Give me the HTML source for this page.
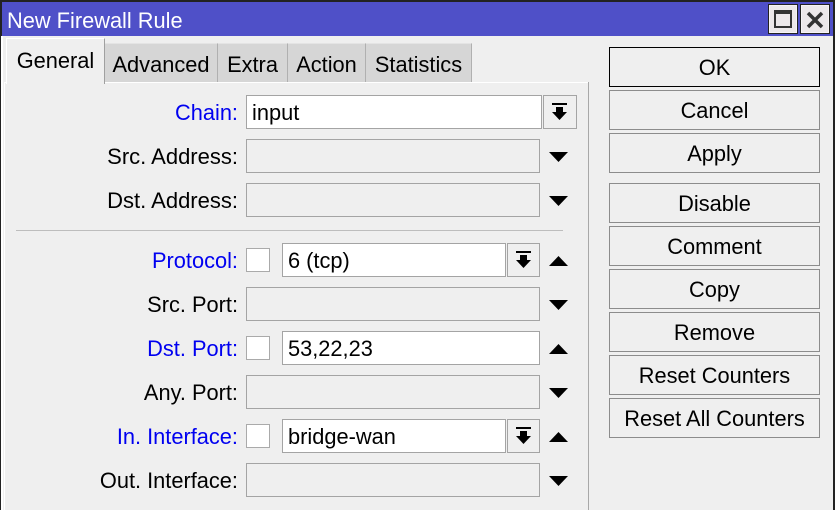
<!DOCTYPE html>
<html><head><meta charset="utf-8"><style>
html,body{margin:0;padding:0;width:835px;height:510px;overflow:hidden;background:#efefef}
*{box-sizing:border-box}
body{font-family:"Liberation Sans",sans-serif;font-size:21.8px;color:#000;position:relative}
div,svg{position:absolute}
.l{right:597px;width:220px;text-align:right;height:34px;line-height:36px;white-space:nowrap}
.blue{color:#0000f0}
.f{height:34px;border:1px solid #a4a4a4;background:#efefef;line-height:34px;padding-left:5px;white-space:nowrap}
.w{background:#fff}
.cb{width:24px;height:24px;background:#fff;border:1px solid #aaa}
.b{left:609px;width:211px;height:40px;border:1px solid #8c8c8c;text-align:center;line-height:40px;background:#efefef}
.t{background:#d6d6d6;top:43px;height:39px;line-height:41px;text-align:center;border-right:1px solid #b0b0b0;border-top:1px solid #e4e4e4}
</style></head><body>
<div style="left:0;top:0;width:835px;height:510px;border-left:2px solid #222;border-top:2px solid #222;border-right:2px solid #222"></div>
<div style="left:1px;top:36px;width:2px;height:474px;background:#fff"></div>
<div style="left:2px;top:2px;width:831px;height:34px;background:#4f50c8"></div>
<div style="left:7px;top:6px;height:30px;line-height:30px;color:#fff">New Firewall Rule</div>

<div style="left:768px;top:4px;width:30px;height:30px;background:#ece8ea;border:1px solid #222;box-shadow:inset 0 0 0 1px #f6f4f5"></div>
<div style="left:774px;top:10px;width:18px;height:18px;border:2px solid #333;border-top-width:4px"></div>
<div style="left:800px;top:4px;width:30px;height:30px;background:#ece8ea;border:1px solid #222;box-shadow:inset 0 0 0 1px #f6f4f5"></div>
<svg style="left:800px;top:4px" width="30" height="30"><path d="M8 9 L22 23 M22 9 L8 23" stroke="#333" stroke-width="3.5" fill="none"/></svg>

<div style="left:4px;top:82px;width:585px;height:428px;border-left:1px solid #fff;border-top:1px solid #fff;background:#efefef"></div>
<div style="left:588px;top:82px;width:1px;height:428px;background:#a8a8a8"></div>

<div style="left:6px;top:38px;width:99px;height:46px;background:#efefef;border-top:1px solid #fff;border-left:1px solid #fff;border-right:1px solid #a0a0a0;text-align:center;line-height:43px">General</div>
<div class="t" style="left:105px;width:113px">Advanced</div>
<div class="t" style="left:218px;width:70px">Extra</div>
<div class="t" style="left:288px;width:78px">Action</div>
<div class="t" style="left:366px;width:106px">Statistics</div>

<div class="l blue" style="top:95px">Chain:</div>
<div class="f w" style="left:246px;top:95px;width:296px">input</div>
<div class="f" style="left:543px;top:95px;width:34px"></div>
<svg style="left:543px;top:95px" width="34" height="34"><path d="M9 8H24V10H9ZM13 12H20V17H24L16.5 25L9 17H13Z" fill="#000"/></svg>

<div class="l" style="top:139px;font-size:22px">Src. Address:</div>
<div class="f" style="left:246px;top:139px;width:294px"></div>
<svg style="left:549px;top:152px" width="20" height="10"><path d="M0 0H19L9.5 10Z"/></svg>

<div class="l" style="top:183px;font-size:22px">Dst. Address:</div>
<div class="f" style="left:246px;top:183px;width:294px"></div>
<svg style="left:549px;top:196px" width="20" height="10"><path d="M0 0H19L9.5 10Z"/></svg>

<div style="left:16px;top:230px;width:547px;height:1px;background:#bdbdbd"></div>

<div class="l blue" style="top:243px">Protocol:</div>
<div class="cb" style="left:246px;top:248px"></div>
<div class="f w" style="left:282px;top:243px;width:224px">6 (tcp)</div>
<div class="f" style="left:507px;top:243px;width:33px"></div>
<svg style="left:507px;top:243px" width="34" height="34"><path d="M9 8H24V10H9ZM13 12H20V17H24L16.5 25L9 17H13Z" fill="#000"/></svg>
<svg style="left:549px;top:256px" width="20" height="10"><path d="M0 10H19L9.5 0Z"/></svg>

<div class="l" style="top:287px">Src. Port:</div>
<div class="f" style="left:246px;top:287px;width:294px"></div>
<svg style="left:549px;top:300px" width="20" height="10"><path d="M0 0H19L9.5 10Z"/></svg>

<div class="l blue" style="top:331px">Dst. Port:</div>
<div class="cb" style="left:246px;top:336px"></div>
<div class="f w" style="left:282px;top:331px;width:258px">53,22,23</div>
<svg style="left:549px;top:344px" width="20" height="10"><path d="M0 10H19L9.5 0Z"/></svg>

<div class="l" style="top:375px">Any. Port:</div>
<div class="f" style="left:246px;top:375px;width:294px"></div>
<svg style="left:549px;top:388px" width="20" height="10"><path d="M0 0H19L9.5 10Z"/></svg>

<div class="l blue" style="top:419px">In. Interface:</div>
<div class="cb" style="left:246px;top:424px"></div>
<div class="f w" style="left:282px;top:419px;width:224px">bridge-wan</div>
<div class="f" style="left:507px;top:419px;width:33px"></div>
<svg style="left:507px;top:419px" width="34" height="34"><path d="M9 8H24V10H9ZM13 12H20V17H24L16.5 25L9 17H13Z" fill="#000"/></svg>
<svg style="left:549px;top:432px" width="20" height="10"><path d="M0 10H19L9.5 0Z"/></svg>

<div class="l" style="top:463px">Out. Interface:</div>
<div class="f" style="left:246px;top:463px;width:294px"></div>
<svg style="left:549px;top:476px" width="20" height="10"><path d="M0 0H19L9.5 10Z"/></svg>

<div class="b" style="top:47px;border-color:#000">OK</div>
<div class="b" style="top:90px">Cancel</div>
<div class="b" style="top:133px">Apply</div>
<div class="b" style="top:183px">Disable</div>
<div class="b" style="top:226px">Comment</div>
<div class="b" style="top:269px">Copy</div>
<div class="b" style="top:312px">Remove</div>
<div class="b" style="top:355px">Reset Counters</div>
<div class="b" style="top:398px">Reset All Counters</div>
</body></html>
